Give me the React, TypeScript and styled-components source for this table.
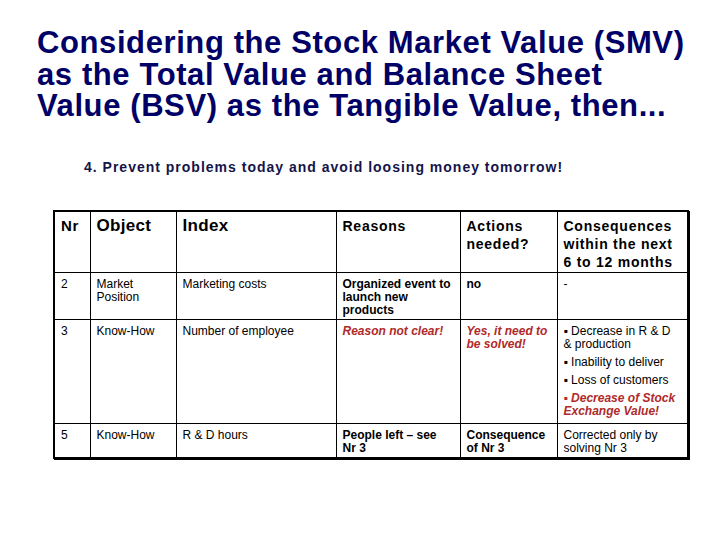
import styled, { createGlobalStyle } from 'styled-components';

const GlobalStyle = createGlobalStyle`
  html, body {
    margin: 0;
    padding: 0;
    background: #ffffff;
  }
  body {
    font-family: "Liberation Sans", Arial, sans-serif;
  }
`;

const Page = styled.div`
  width: 720px;
  height: 540px;
  box-sizing: border-box;
  padding: 27px 0 0 37px;
  background: #ffffff;
`;

const Title = styled.h1`
  margin: 0;
  font-size: 31px;
  line-height: 31.5px;
  font-weight: bold;
  color: #000066;
  letter-spacing: 0.6px;
`;

const Subtitle = styled.h2`
  margin: 36px 0 0 47px;
  font-size: 14px;
  line-height: 18px;
  font-weight: bold;
  color: #14144a;
  letter-spacing: 1px;
`;

const Table = styled.table`
  margin: 34px 0 0 16px;
  border-collapse: collapse;
  table-layout: fixed;
  width: 634px;
  border: 2px solid #000;
  box-shadow: 1px 1px 0 #000;
`;

const Row = styled.tr<{ $h: number }>`
  height: ${(p) => p.$h}px;
`;

const HeadCell = styled.th<{ $size?: number }>`
  border: 1px solid #000;
  padding: 5px 6px 0 6px;
  vertical-align: top;
  text-align: left;
  font-size: ${(p) => p.$size ?? 14}px;
  line-height: 18px;
  font-weight: bold;
  letter-spacing: ${(p) => (p.$size && p.$size > 15 ? '0.3px' : '0.75px')};
  color: #000;
`;

const Cell = styled.td<{ $bold?: boolean; $alert?: boolean }>`
  border: 1px solid #000;
  padding: 5px 6px 0 6px;
  vertical-align: top;
  font-size: 12px;
  line-height: 13px;
  font-weight: ${(p) => (p.$bold || p.$alert ? 'bold' : 'normal')};
  font-style: ${(p) => (p.$alert ? 'italic' : 'normal')};
  color: ${(p) => (p.$alert ? '#b02a2a' : '#000')};
`;

const Point = styled.p<{ $alert?: boolean }>`
  margin: 0 0 5px 0;
  font-weight: ${(p) => (p.$alert ? 'bold' : 'normal')};
  font-style: ${(p) => (p.$alert ? 'italic' : 'normal')};
  color: ${(p) => (p.$alert ? '#b02a2a' : '#000')};
`;

const widths = [36, 86, 160, 124, 97, 131];

export default function App() {
  return (
    <>
      <GlobalStyle />
      <Page>
        <Title>
          Considering the Stock Market Value (SMV)
          <br />
          as the Total Value and Balance Sheet
          <br />
          Value (BSV) as the Tangible Value, then...
        </Title>
        <Subtitle>4. Prevent problems today and avoid loosing money tomorrow!</Subtitle>
        <Table>
          <colgroup>
            {widths.map((w, i) => (
              <col key={i} style={{ width: w }} />
            ))}
          </colgroup>
          <tbody>
            <Row $h={62}>
              <HeadCell $size={15}>Nr</HeadCell>
              <HeadCell $size={17}>Object</HeadCell>
              <HeadCell $size={17}>Index</HeadCell>
              <HeadCell>Reasons</HeadCell>
              <HeadCell>Actions needed?</HeadCell>
              <HeadCell>Consequences within the next 6 to 12 months</HeadCell>
            </Row>
            <Row $h={47}>
              <Cell>2</Cell>
              <Cell>Market Position</Cell>
              <Cell>Marketing costs</Cell>
              <Cell $bold>Organized event to launch new products</Cell>
              <Cell $bold>no</Cell>
              <Cell>-</Cell>
            </Row>
            <Row $h={104}>
              <Cell>3</Cell>
              <Cell>Know-How</Cell>
              <Cell>Number of employee</Cell>
              <Cell $alert>Reason not clear!</Cell>
              <Cell $alert>Yes, it need to be solved!</Cell>
              <Cell>
                <Point>▪ Decrease in R &amp; D &amp; production</Point>
                <Point>▪ Inability to deliver</Point>
                <Point>▪ Loss of customers</Point>
                <Point $alert>▪ Decrease of Stock Exchange Value!</Point>
              </Cell>
            </Row>
            <Row $h={34}>
              <Cell>5</Cell>
              <Cell>Know-How</Cell>
              <Cell>R &amp; D hours</Cell>
              <Cell $bold>People left – see Nr&nbsp;3</Cell>
              <Cell $bold>Consequence of Nr&nbsp;3</Cell>
              <Cell>Corrected only by solving Nr&nbsp;3</Cell>
            </Row>
          </tbody>
        </Table>
      </Page>
    </>
  );
}
